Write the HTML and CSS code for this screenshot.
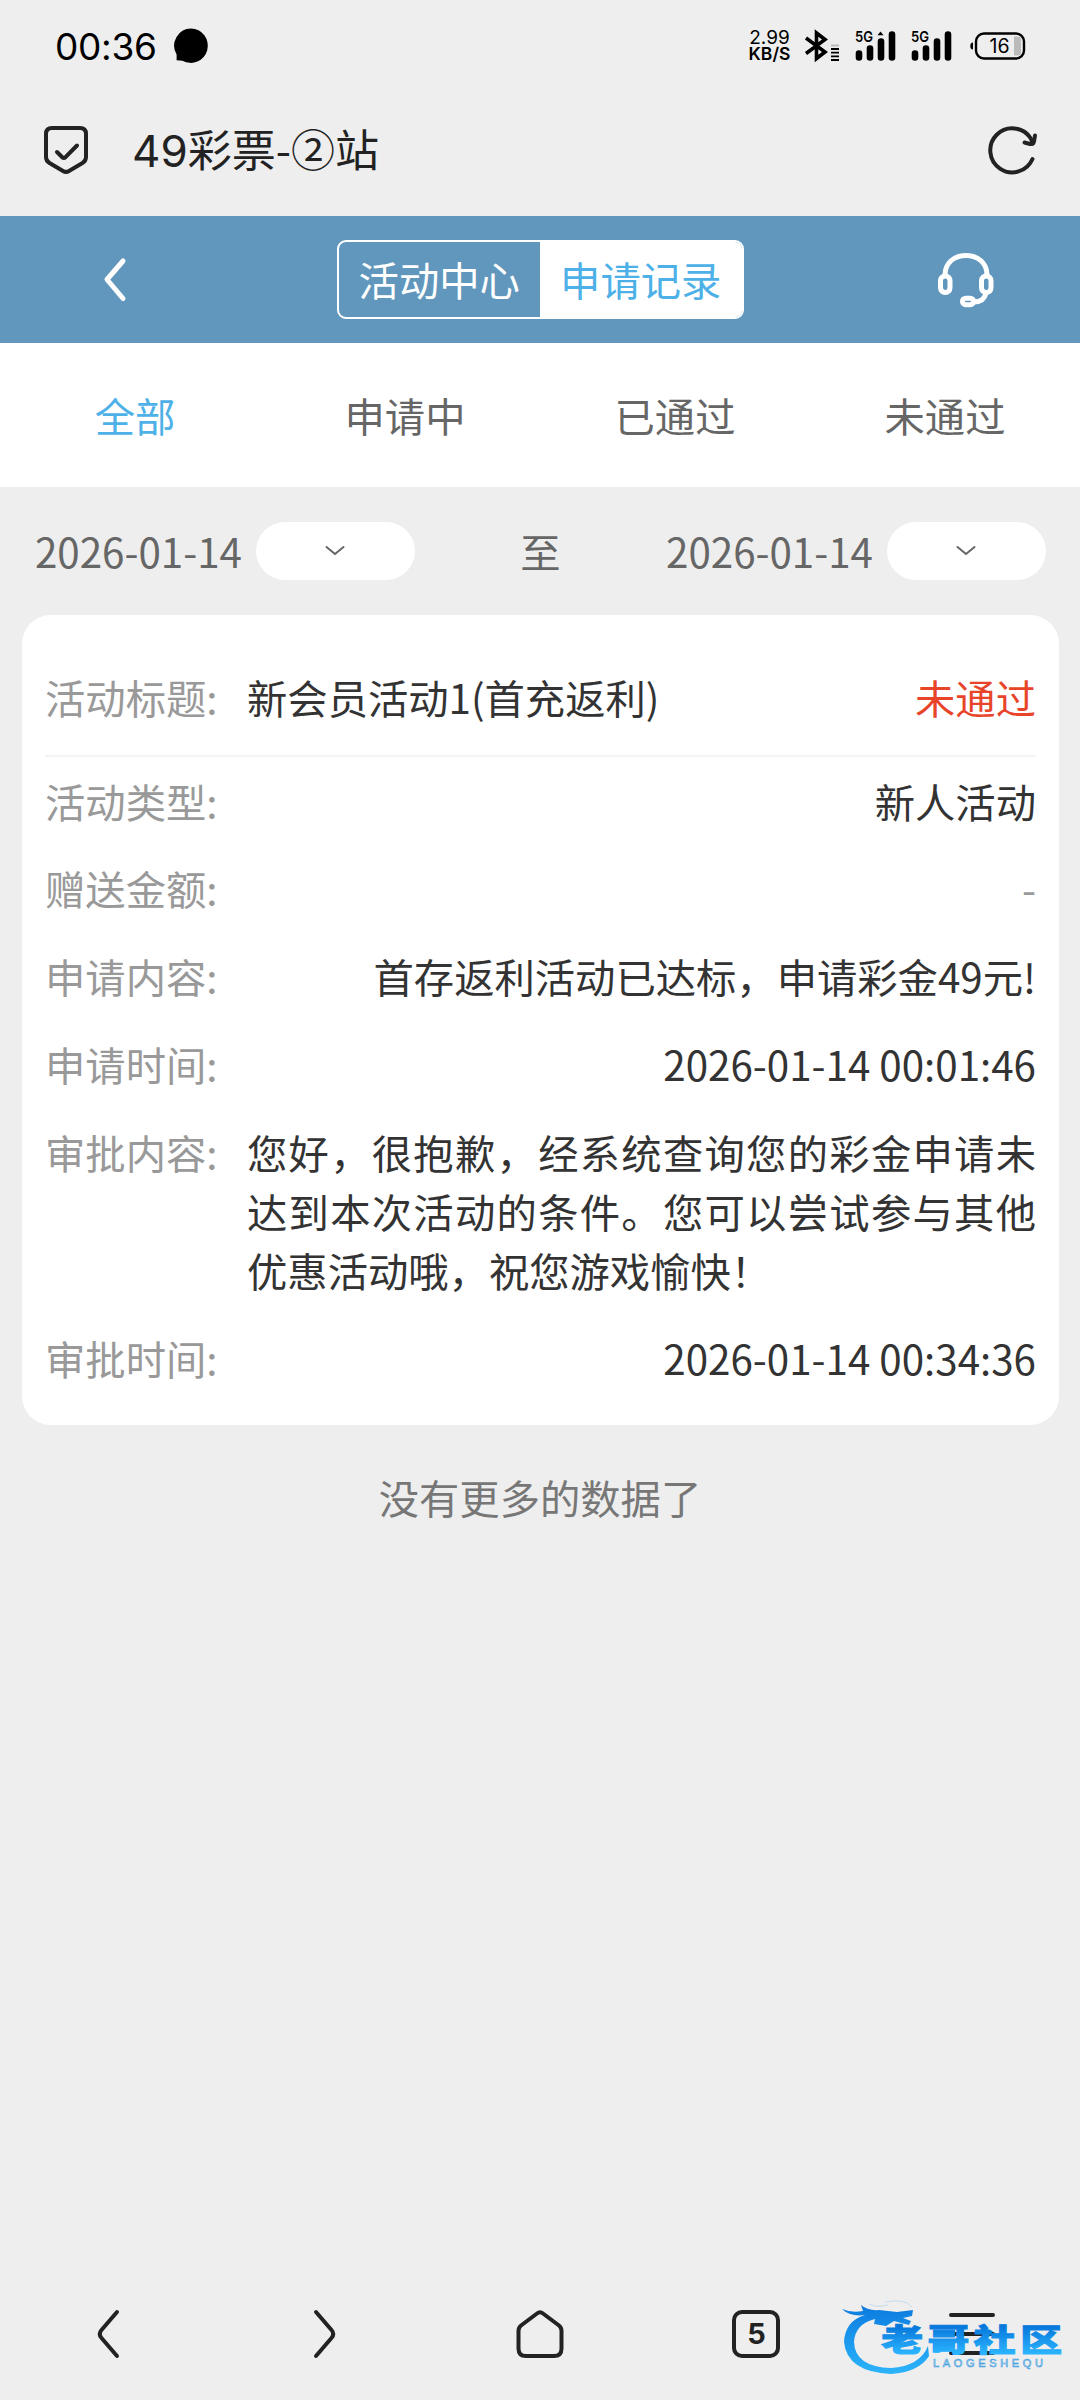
FILE: index.html
```html
<!DOCTYPE html>
<html lang="zh-CN">
<head>
    <meta charset="UTF-8">
    <meta name="viewport" content="width=device-width, initial-scale=1.0">
    <title>49彩票-②站</title>
    <link rel="stylesheet" href="styles.css">
</head>
<body>

<div class="status-bar">
    <div class="status-left">
        <span class="clock">00:36</span>
        <svg class="bubble" viewBox="0 0 34 36"><path d="M17 0.500a17 17.200 0 1 1 -8.500 32.200L2.600 32.200V26.500A17 17.200 0 0 1 17 0.500z" fill="#000"/></svg>
    </div>
    <div class="status-right">
        <div class="speed"><span>2.99</span><b>KB/S</b></div>
        <svg class="bluetooth" viewBox="0 0 36 32">
            <path d="M2 8L21 22L12.500 28.500V3L21 9.500L2 23.500" fill="none" stroke="#000" stroke-width="3.600"/>
            <path d="M27 15.500h8" stroke="#bbb" stroke-width="2"/>
            <path d="M27 19h8M27 22.700h8M27 26.300h8M27 30h8" stroke="#000" stroke-width="1.800"/>
        </svg>
        <svg class="signal" viewBox="0 0 42 30">
            <text x="0" y="11" class="net" textLength="18" lengthAdjust="spacingAndGlyphs">5G</text>
            <path d="M22.500 4.200L25.500 0.500L28.500 4.200z"/>
            <path d="M4 22.500v4M15 17.500v9M26 10.500v16M37 3.500v23" stroke="#000" stroke-width="6.600" stroke-linecap="round"/>
        </svg>
        <svg class="signal" viewBox="0 0 42 30">
            <text x="0" y="11" class="net" textLength="18" lengthAdjust="spacingAndGlyphs">5G</text>
            <path d="M4 22.500v4M15 17.500v9M26 10.500v16M37 3.500v23" stroke="#000" stroke-width="6.600" stroke-linecap="round"/>
        </svg>
        <svg class="battery" viewBox="0 0 56 28">
            <path d="M3 10.500Q0.300 10.500 0.300 14T3 17.500z"/>
            <path d="M44 4.500h4q3 0 3 3v13q0 3 -3 3h-4z" fill="#bbb"/>
            <rect x="6" y="1.500" width="48" height="25" rx="8" fill="none" stroke="#000" stroke-width="2.400"/>
            <text x="29.500" y="20.500" class="level" text-anchor="middle">16</text>
        </svg>
    </div>
</div>

<div class="address-bar">
    <svg class="shield" viewBox="0 0 46 50">
        <path d="M9 3H37Q43 3 43 9V32Q43 36 39.500 38L26 46Q23 47.800 20 46L6.500 38Q3 36 3 32V9Q3 3 9 3z"/>
        <path d="M14 27L19.500 32.500Q21 33.500 22.500 32.200L34 20.500"/>
    </svg>
    <span class="site-title">49彩票<span class="circled">-②</span>站</span>
    <svg class="reload" viewBox="0 0 50 50">
        <path d="M43.500 34A22 22 0 1 1 41.500 13Q43 15.500 43.500 18.500"/>
        <path d="M35.500 17.500L41 19Q44.500 19.500 45 16.500L46 10.500"/>
    </svg>
</div>

<header class="header">
    <svg class="back" viewBox="0 0 24 46"><path d="M20 4L4 22.500L20 41.500"/></svg>
    <div class="switch">
        <a class="switch-item">活动中心</a>
        <a class="switch-item active">申请记录</a>
    </div>
    <svg class="service" viewBox="0 0 58 56">
        <path d="M8 23C8 11 17 3.500 29 3.500S50 11 50 23"/>
        <rect x="3.500" y="24" width="9.500" height="16.500" rx="4.700"/>
        <rect x="44.500" y="24" width="9.500" height="16.500" rx="4.700"/>
        <path d="M49 41Q47 50 37 50"/>
        <rect x="25.500" y="46.200" width="11" height="6.500" rx="3.200"/>
    </svg>
</header>

<nav class="tabs">
    <a class="tab active">全部</a>
    <a class="tab">申请中</a>
    <a class="tab">已通过</a>
    <a class="tab">未通过</a>
</nav>

<div class="dates">
    <div class="date">
        <span>2026-01-14</span>
        <div class="pill"><svg viewBox="0 0 20 12"><path d="M1.500 2L10 9L18.500 2"/></svg></div>
    </div>
    <span>至</span>
    <div class="date">
        <span>2026-01-14</span>
        <div class="pill"><svg viewBox="0 0 20 12"><path d="M1.500 2L10 9L18.500 2"/></svg></div>
    </div>
</div>

<main class="card">
    <div class="row title-row">
        <span class="label">活动标题:</span>
        <span class="name">新会员活动1(首充返利)</span>
        <span class="status">未通过</span>
    </div>
    <div class="row"><span class="label">活动类型:</span><span class="value">新人活动</span></div>
    <div class="row"><span class="label">赠送金额:</span><span class="value empty">-</span></div>
    <div class="row"><span class="label">申请内容:</span><span class="value">首存返利活动已达标，申请彩金49元!</span></div>
    <div class="row"><span class="label">申请时间:</span><span class="value">2026-01-14 00:01:46</span></div>
    <div class="row"><span class="label">审批内容:</span><span class="value text">您好，很抱歉，经系统查询您的彩金申请未达到本次活动的条件。您可以尝试参与其他优惠活动哦，祝您游戏愉快！</span></div>
    <div class="row"><span class="label">审批时间:</span><span class="value">2026-01-14 00:34:36</span></div>
</main>

<p class="no-more">没有更多的数据了</p>

<footer class="toolbar">
    <div class="tool"><svg viewBox="0 0 50 50"><path d="M34 3L18.500 21Q15 25 18.500 29L34 47"/></svg></div>
    <div class="tool"><svg viewBox="0 0 50 50"><path d="M17 3L32.500 21Q36 25 32.500 29L17 47"/></svg></div>
    <div class="tool"><svg viewBox="0 0 50 50"><path d="M22 4.500Q25 2 28 4.500L44 16.500Q46.500 18.500 46.500 22V39.500Q46.500 47 39 47H11Q3.500 47 3.500 39.500V22Q3.500 18.500 6 16.500z"/></svg></div>
    <div class="tool"><svg viewBox="0 0 50 50"><rect x="3" y="3" width="44" height="44" rx="8"/><text x="25.500" y="35" text-anchor="middle">5</text></svg></div>
    <div class="tool"><svg viewBox="0 0 50 50"><path d="M4 6H46M4 25H46M4 44H46"/></svg></div>

    <svg class="watermark" viewBox="0 0 230 90">
        <defs>
            <linearGradient id="ring" x1="0" y1="0" x2="0" y2="1">
                <stop offset="0" stop-color="#0b7ade"/>
                <stop offset="1" stop-color="#2cb4fb"/>
            </linearGradient>
            <linearGradient id="word" x1="0" y1="0" x2="0" y2="1">
                <stop offset="0.250" stop-color="#0678dc"/>
                <stop offset="0.850" stop-color="#2cb5ff"/>
            </linearGradient>
        </defs>
        <path fill="url(#ring)" d="M2 9Q11 13 23 11L21 5Q28 11 39 10L57 12L73 10L72 16L63 18L71 21L69 25L54 21L46 26L34 24L35 19Q15 24 14 42Q15 67 51 68Q80 66 88 46L89 56Q79 72 51 74Q7 72 4 42Q5 21 25 15Q10 17 2 9z"/>
        <path class="whisker" d="M29 4Q37 8 48 5M45 2Q65 -2 72 7"/>
        <text class="word" transform="scale(1.350 1)" x="30.500" y="51.500" textLength="134" fill="url(#word)" stroke="url(#word)">老哥社区</text>
        <text class="latin" x="93" y="66.500" textLength="110">LAOGESHEQU</text>
    </svg>
</footer>

</body>
</html>
```

FILE: styles.css
```css
* {
    box-sizing: border-box;
}

body {
    margin: 0;
    min-height: 2400px;
    display: flex;
    flex-direction: column;
    background-color: #eee;
    color: #666;
    font-family: "Noto Sans CJK SC", sans-serif;
    font-size: 40.32px;
    line-height: 58.8px;
}

svg {
    display: block;
    flex: none;
    overflow: visible;
}

/* phone status bar */
.status-bar {
    height: 92px;
    padding: 0 55px 0 55px;
    display: flex;
    align-items: center;
    justify-content: space-between;
    color: #000;
    font-family: Inter, sans-serif;
}

.status-left {
    display: flex;
    align-items: center;
    gap: 18px;
}

.clock {
    width: 101px;
    padding-top: 2px;
    font-size: 37px;
    letter-spacing: -0.3px;
}

.bubble {
    width: 34px;
    height: 36px;
}

.status-right {
    display: flex;
    align-items: center;
}

.speed {
    width: 43px;
    margin-right: 13px;
    display: flex;
    flex-direction: column;
    align-items: center;
    font-size: 19px;
    line-height: 16px;
}

.speed b {
    font-size: 17.5px;
    font-weight: 600;
}

.bluetooth {
    width: 36px;
    height: 32px;
    margin-right: 15px;
}

.signal {
    width: 42px;
    height: 30px;
    margin-right: 14px;
}

.net {
    font-size: 15px;
    font-weight: 600;
}

.battery {
    width: 56px;
    height: 28px;
    margin-left: 3px;
    margin-right: -1px;
}

.level {
    font-size: 19.5px;
}

/* browser address bar */
.address-bar {
    height: 124px;
    padding: 0 41px 8px 43px;
    display: flex;
    align-items: center;
}

.shield, .reload {
    fill: none;
    stroke: #222;
    stroke-width: 4;
    stroke-linecap: round;
    stroke-linejoin: round;
}

.shield {
    width: 46px;
    height: 50px;
}

.reload {
    width: 50px;
    height: 50px;
}

.site-title {
    flex: 1;
    margin-left: 43px;
    color: #222;
    font-family: Inter, "Noto Sans CJK SC", sans-serif;
    font-size: 44px;
}

.circled {
    font-family: "Noto Sans CJK SC", sans-serif;
}

/* page header */
.header {
    height: 127px;
    padding: 0 85px 0 103px;
    display: flex;
    align-items: center;
    justify-content: space-between;
    background-color: #6197bc;
}

.back, .service {
    fill: none;
    stroke: #fff;
    stroke-width: 5;
    stroke-linecap: round;
    stroke-linejoin: round;
}

.back {
    width: 24px;
    height: 46px;
    margin-right: 16px;
}

.service {
    width: 58px;
    height: 56px;
}

.switch {
    width: 407px;
    height: 79px;
    display: flex;
    border: 2px solid #fff;
    border-radius: 9px;
    overflow: hidden;
}

.switch-item {
    flex: 1;
    display: flex;
    align-items: center;
    justify-content: center;
    color: #fff;
}

.switch-item.active {
    background-color: #fff;
    color: #4db1e8;
}

.tabs {
    height: 144px;
    display: grid;
    grid-template-columns: repeat(4, 1fr);
    align-items: center;
    background-color: #fff;
    text-align: center;
}

.tab.active {
    color: #4db1e8;
}

/* date range */
.dates {
    height: 128px;
    padding: 0 34px 0 35px;
    display: flex;
    align-items: center;
    justify-content: space-between;
}

.date {
    display: flex;
    align-items: center;
    gap: 14px;
}

.pill {
    width: 159px;
    height: 58px;
    display: flex;
    align-items: center;
    justify-content: center;
    background-color: #fff;
    border-radius: 29px;
}

.pill svg {
    width: 20px;
    height: 12px;
    fill: none;
    stroke: #666;
    stroke-width: 2;
    stroke-linecap: round;
}

/* application record */
.card {
    margin: 0 21px 0 22px;
    padding: 28px 23px;
    height: 810px;
    background-color: #fff;
    border-radius: 28.800px;
    color: #333;
}

.row {
    display: flex;
    margin-bottom: 29.2px;
}

.title-row {
    height: 114px;
    align-items: center;
    margin-bottom: 14.500px;
    padding-bottom: 4px;
    border-bottom: 2px solid #f4f4f4;
}

.label {
    width: 202px;
    flex: none;
    color: #999;
}

.name {
    flex: 1;
}

.status {
    color: #e8442a;
}

.value {
    flex: 1;
    text-align: right;
}

.value.empty {
    color: #999;
}

.value.text {
    text-align: justify;
}

.no-more {
    margin: 43px 0 0;
    color: #777;
    text-align: center;
}

/* browser toolbar */
.toolbar {
    position: relative;
    height: 132px;
    margin-top: auto;
    display: grid;
    grid-template-columns: repeat(5, 1fr);
    align-items: center;
    justify-items: center;
}

.tool svg {
    width: 50px;
    height: 50px;
    fill: none;
    stroke: #222;
    stroke-width: 4;
    stroke-linecap: round;
    stroke-linejoin: round;
}

.tool text {
    fill: #222;
    stroke: none;
    font-family: Inter, sans-serif;
    font-size: 29px;
    font-weight: 700;
}

.watermark {
    position: absolute;
    left: 840px;
    top: 32px;
    width: 230px;
    height: 90px;
}

.whisker {
    fill: none;
    stroke: #a9cdec;
    stroke-width: 0.6;
}

.word {
    font-size: 31px;
    font-weight: 900;
    stroke-width: 1;
}

.latin {
    fill: #d7ebf8;
    stroke: #3b9ce0;
    stroke-width: 0.6;
    font-family: "Liberation Sans", sans-serif;
    font-size: 11px;
}
```
